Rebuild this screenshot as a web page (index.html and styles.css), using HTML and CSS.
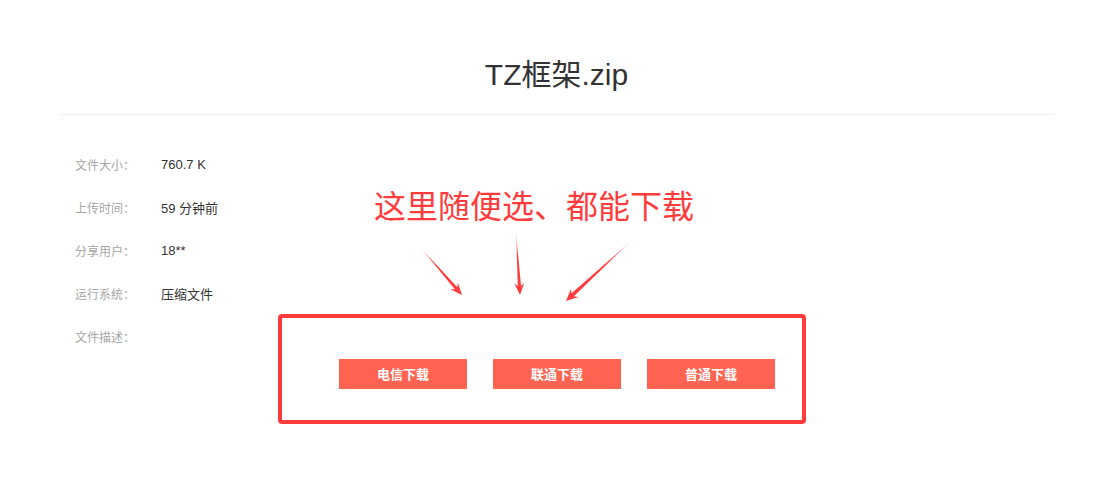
FILE: index.html
```html
<!DOCTYPE html>
<html lang="zh-CN">
<head>
    <meta charset="UTF-8">
    <meta name="viewport" content="width=device-width, initial-scale=1.0">
    <title>TZ框架.zip</title>
    <link rel="stylesheet" href="styles.css">
</head>
<body>
    <div class="page">
        <h1 class="title">TZ框架.zip</h1>

        <ul class="info">
            <li><span class="label">文件大小：</span><span class="value">760.7 K</span></li>
            <li><span class="label">上传时间：</span><span class="value">59 分钟前</span></li>
            <li><span class="label">分享用户：</span><span class="value">18**</span></li>
            <li><span class="label">运行系统：</span><span class="value">压缩文件</span></li>
            <li><span class="label">文件描述：</span><span class="value"></span></li>
        </ul>

        <div class="downloads">
            <a class="btn" href="#">电信下载</a>
            <a class="btn" href="#">联通下载</a>
            <a class="btn" href="#">普通下载</a>
        </div>
    </div>

    <!-- hint drawn on top of the page -->
    <div class="note">这里随便选、都能下载</div>
    <div class="note-box"></div>
    <svg class="note-arrows" width="1113" height="501" viewBox="0 0 1113 501">
        <defs>
            <linearGradient id="fade" x1="0" y1="0" x2="1" y2="0">
                <stop offset="0" stop-color="#ff3b3b" stop-opacity="0.2"/>
                <stop offset="0.4" stop-color="#ff3b3b" stop-opacity="1"/>
            </linearGradient>
        </defs>
        <polygon fill="url(#fade)" transform="translate(462 295) rotate(48.8)"
                 points="-64,0 -9,-1.6 -12,-5 0,0 -12,5 -9,1.6"/>
        <polygon fill="url(#fade)" transform="translate(520 295) rotate(86.4)"
                 points="-63,0 -9,-1.6 -12,-5 0,0 -12,5 -9,1.6"/>
        <polygon fill="url(#fade)" transform="translate(566 301) rotate(137.3)"
                 points="-90,0 -9,-1.8 -12,-5.5 0,0 -12,5.5 -9,1.8"/>
    </svg>
</body>
</html>
```

FILE: styles.css
```css
body {
    margin: 0;
    background: #fff;
    font-family: "Liberation Sans", "Noto Sans CJK SC", sans-serif;
    color: #333;
}
.page {
    width: 993px;
    margin: 0 auto;
}
.title {
    margin: 0;
    padding: 55px 0 19px;
    font-size: 30px;
    font-weight: normal;
    line-height: 40px;
    text-align: center;
    color: #333;
    border-bottom: 1px solid #eee;
}
.info {
    list-style: none;
    margin: 0;
    padding: 28px 15px 0;
}
.info li {
    display: flex;
    align-items: center;
    height: 43px;
}
.label {
    width: 86px;
    font-size: 12px;
    color: #a6a6a6;
}
.value {
    font-size: 13px;
    color: #333;
}
.downloads {
    display: flex;
    gap: 26px;
    margin: 1px 0 0 279px;
}
.btn {
    display: block;
    width: 128px;
    height: 30px;
    line-height: 31px;
    text-align: center;
    background: #ff6452;
    color: #fff;
    font-size: 13px;
    font-weight: bold;
    text-decoration: none;
    box-shadow: 0 1px 1px #ddd;
}

/* overlay hint */
.note {
    position: absolute;
    left: 374px;
    top: 190px;
    font-size: 32px;
    line-height: 34px;
    color: #ff3b3b;
    white-space: nowrap;
}
.note-box {
    position: absolute;
    left: 278px;
    top: 314px;
    width: 520px;
    height: 102px;
    border: 4px solid #ff3b3b;
    border-radius: 4px;
}
.note-arrows {
    position: absolute;
    left: 0;
    top: 0;
}
```
